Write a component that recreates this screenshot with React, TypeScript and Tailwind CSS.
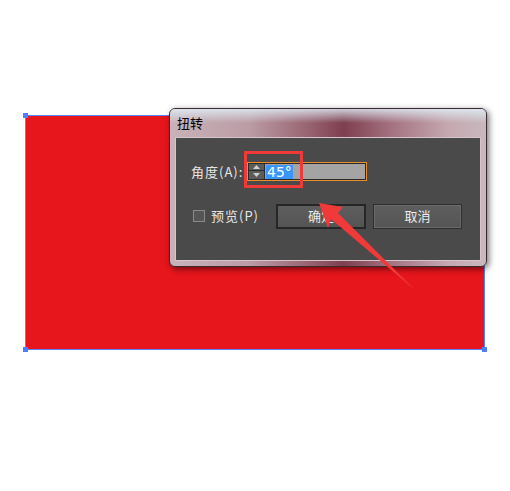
import React from "react";

const CJK = "font-['Noto_Sans_CJK_SC','Noto_Sans',sans-serif]";

function Spinner() {
  return (
    <div className="flex w-[16px] flex-col border-r border-[#2c2c2c] bg-[#4f4f4f]">
      <div className="flex h-[8px] items-center justify-center border-b border-[#2c2c2c] bg-[#5c5c5c]">
        <svg width="7" height="4" viewBox="0 0 7 4">
          <polygon points="3.5,0 7,4 0,4" fill="#cfcfcf" />
        </svg>
      </div>
      <div className="flex h-[9px] items-center justify-center bg-[#5c5c5c]">
        <svg width="7" height="4" viewBox="0 0 7 4">
          <polygon points="0,0 7,0 3.5,4" fill="#cfcfcf" />
        </svg>
      </div>
    </div>
  );
}

export default function App() {
  return (
    <div className={`relative h-[491px] w-[510px] overflow-hidden bg-white ${CJK}`}>
      {/* artboard shape */}
      <div className="relative ml-[25px] mt-[115px] h-[235px] w-[460px] border border-[#5a84ff] bg-[#e7151c]">
        <div className="absolute -left-[3px] -top-[3px] h-[5px] w-[5px] bg-[#4f7dff]" />
        <div className="absolute -bottom-[3px] -left-[3px] h-[5px] w-[5px] bg-[#4f7dff]" />
        <div className="absolute -bottom-[3px] -right-[3px] h-[5px] w-[5px] bg-[#4f7dff]" />
      </div>

      {/* dialog window */}
      <div className="absolute left-[169px] top-[108px] flex h-[159px] w-[318px] flex-col overflow-hidden rounded-[6px] border border-[#3b2a30] bg-[linear-gradient(90deg,#c9b2b9_0%,#bb9ca5_25%,#96606e_45%,#7e3f50_55%,#a47280_70%,#c5a8b0_88%,#c8b8bd_100%)] shadow-[2px_2px_6px_rgba(0,0,0,0.55)]">
        <div className="pointer-events-none absolute inset-x-0 top-0 h-[14px] bg-[linear-gradient(180deg,rgba(225,242,250,0.8),rgba(255,255,255,0))]" />
        <div className="relative flex h-[28px] items-center pl-[7px] text-[13px] text-black">
          扭转
        </div>
        <div className="mx-[5px] mb-[5px] flex-1 border border-[#d6c6cb] bg-[#4a4a4a] px-[15px] pt-[24px]">
          <div className="flex items-center text-[13px] text-[#e6e6e6]">
            <span className="w-[56px] tracking-[1px]">角度(A):</span>
            <div className="flex h-[19px] w-[120px] border border-[#e88f2c]">
              <div className="flex flex-1 border border-[#2a2a2a]">
                <Spinner />
                <div className="flex flex-1 items-center bg-[#a4a4a4] pl-[1px]">
                  <span className="flex h-[14px] items-center bg-[#3a96ff] px-[1px] font-['DejaVu_Sans',sans-serif] text-[14px] leading-none text-white">
                    45°
                  </span>
                </div>
              </div>
            </div>
          </div>

          <div className="mt-[22px] flex items-center">
            <div className="ml-[2px] h-[12px] w-[12px] border border-[#8a8a8a] bg-[#555555]" />
            <span className="ml-[6px] w-[65px] text-[13px] tracking-[1px] text-[#e6e6e6]">预览(P)</span>
            <button className="h-[25px] w-[90px] border-2 border-[#262626] bg-[linear-gradient(180deg,#5e5e5e,#545454)] text-[13px] text-[#ececec]">
              确定
            </button>
            <button className="ml-[7px] h-[25px] w-[89px] border border-[#2e2e2e] bg-[linear-gradient(180deg,#5e5e5e,#545454)] text-[13px] text-[#ececec] shadow-[inset_0_0_0_1px_#6a6a6a]">
              取消
            </button>
          </div>
        </div>
      </div>

      {/* annotation: red box */}
      <div className="absolute left-[244px] top-[151px] h-[37px] w-[59px] border-[3px] border-[#f03a3a]" />

      {/* annotation: red arrow */}
      <svg className="absolute left-0 top-0" width="510" height="491" viewBox="0 0 510 491">
        <polygon
          points="319,203 343,207 338,213 416,291 331,219 328,228"
          fill="#f03a3a"
        />
      </svg>
    </div>
  );
}
